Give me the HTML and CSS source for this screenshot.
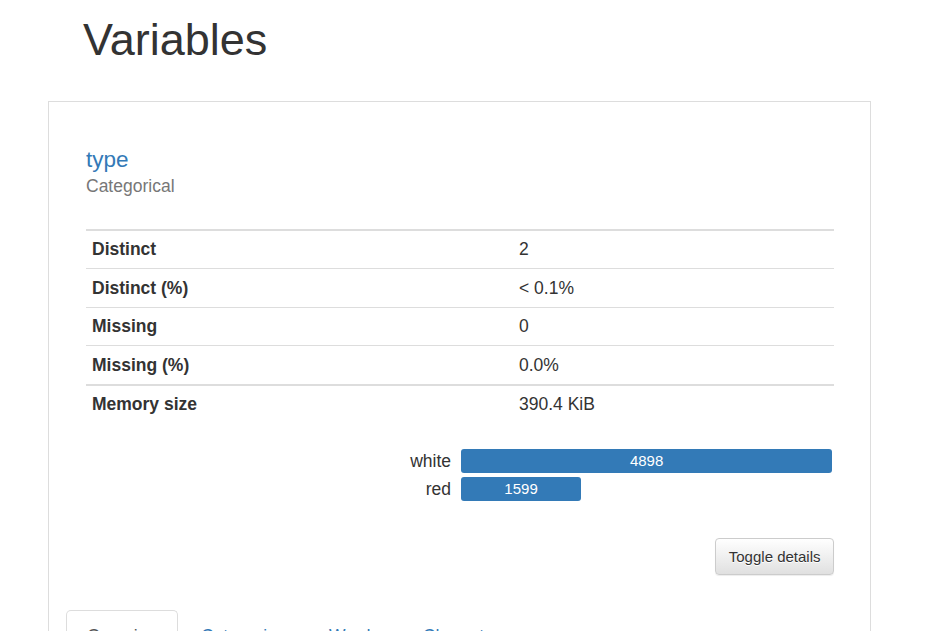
FILE: index.html
```html
<!DOCTYPE html>
<html>
<head>
<meta charset="utf-8">
<link rel="stylesheet" href="styles.css">
</head>
<body>
<div class="page">
  <h1 class="page-title">Variables</h1>
  <div class="panel">
    <div class="var-head">
      <div class="var-name">type</div>
      <div class="var-type">Categorical</div>
    </div>
    <table class="stats">
      <tbody>
        <tr><th>Distinct</th><td>2</td></tr>
        <tr><th>Distinct (%)</th><td>&lt; 0.1%</td></tr>
        <tr><th>Missing</th><td>0</td></tr>
        <tr><th>Missing (%)</th><td>0.0%</td></tr>
        <tr class="sep"><th>Memory size</th><td>390.4 KiB</td></tr>
      </tbody>
    </table>
    <div class="freq">
      <div class="freq-label">white</div>
      <div class="freq-cell"><div class="freq-bar" style="width: 99.5%">4898</div></div>
      <div class="freq-label">red</div>
      <div class="freq-cell"><div class="freq-bar" style="width: 32.2%">1599</div></div>
    </div>
    <div class="actions">
      <button class="btn">Toggle details</button>
    </div>
    <ul class="tabs">
      <li class="tab active">Overview</li>
      <li class="tab">Categories</li>
      <li class="tab">Words</li>
      <li class="tab">Characters</li>
    </ul>
  </div>
</div>
</body>
</html>
```
FILE: styles.css
```css
html, body {
  margin: 0;
  padding: 0;
  background: #fff;
}
body {
  font-family: "Liberation Sans", Arial, sans-serif;
  font-size: 17.5px;
  line-height: 25px;
  color: #333;
  overflow: hidden;
  height: 631px;
}
.page {
  padding: 15px 0 0 48px;
  width: 823px;
}
.page-title {
  margin: 0 0 36.5px 35px;
  font-size: 45px;
  line-height: 49.5px;
  font-weight: 400;
  color: #333;
}
.panel {
  border: 1px solid #ddd;
  border-bottom: none;
  padding: 46px 36px 0 37px;
  height: 600px;
}
.var-head {
  margin-bottom: 30px;
}
.var-name {
  font-size: 22.5px;
  line-height: 24.75px;
  color: #337ab7;
}
.var-type {
  margin-top: 1px;
  color: #777;
  font-size: 17.5px;
  line-height: 25px;
}
.stats {
  width: 748px;
  border-collapse: collapse;
  border-top: 2px solid #ddd;
}
.stats th, .stats td {
  text-align: left;
  padding: 6.25px 6px;
  line-height: 25px;
  vertical-align: top;
}
.stats th {
  width: 415px;
  font-weight: 700;
}
.stats tr + tr {
  border-top: 1px solid #ddd;
}
.stats tr.sep {
  border-top: 2px solid #ddd;
}
.freq {
  margin-top: 26px;
  width: 748px;
  display: grid;
  grid-template-columns: 365px 373px;
  column-gap: 10px;
  row-gap: 4px;
}
.freq-label {
  text-align: right;
  line-height: 24px;
  font-size: 17.5px;
}
.freq-bar {
  background: #337ab7;
  color: #fff;
  height: 24px;
  line-height: 24px;
  font-size: 15px;
  text-align: center;
  border-radius: 3px;
}
.actions {
  display: flex;
  justify-content: flex-end;
  width: 748px;
  margin-top: 37px;
}
.btn {
  font-family: "Liberation Sans", Arial, sans-serif;
  font-size: 15px;
  line-height: 22.5px;
  padding: 6.25px 12.5px;
  color: #333;
  border: 1px solid #ccc;
  border-radius: 4px;
  background: linear-gradient(to bottom, #fff 0%, #e0e0e0 100%);
  box-shadow: inset 0 1px 0 rgba(255,255,255,.15), 0 1px 1px rgba(0,0,0,.075);
  text-shadow: 0 1px 0 #fff;
}
.tabs {
  list-style: none;
  margin: 35px 0 0 -20px;
  padding: 0;
  display: flex;
  border-bottom: 1px solid #ddd;
}
.tab {
  margin-right: 2.5px;
  padding: 13px 19.5px 12px 19.5px;
  border: 1px solid transparent;
  border-radius: 5px 5px 0 0;
  color: #337ab7;
  line-height: 25px;
}
.tab.active {
  color: #555;
  border-color: #ddd;
  border-bottom-color: transparent;
  padding-left: 20px;
  padding-right: 17px;
}
```
